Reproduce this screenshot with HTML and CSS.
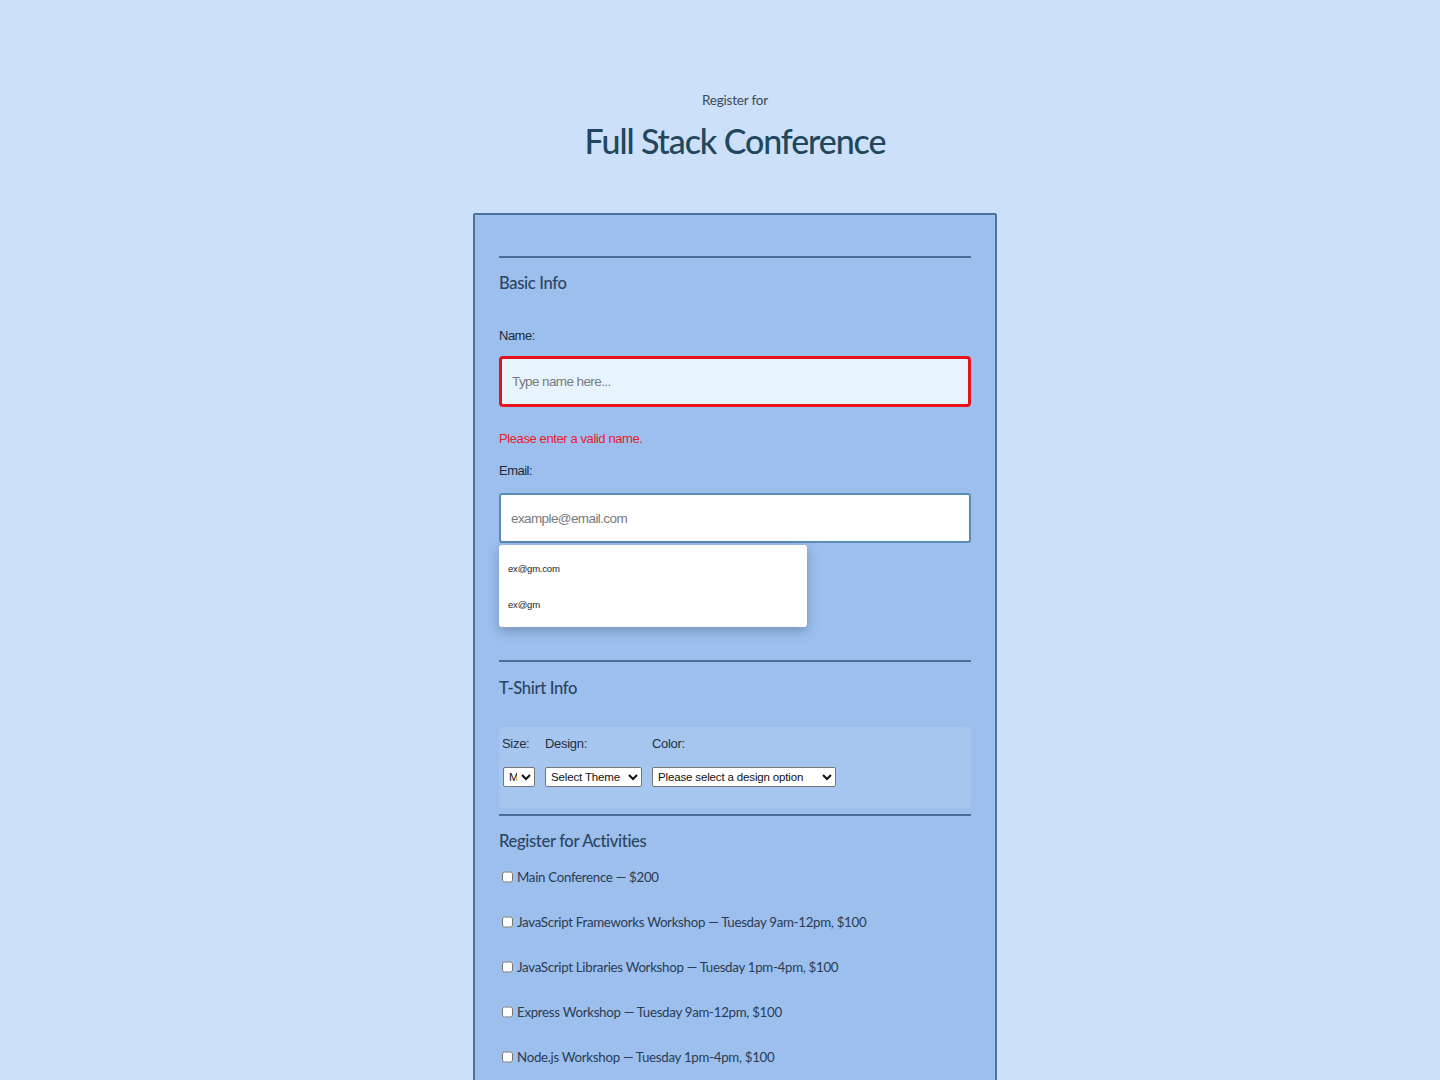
FILE: index.html
```html
<!DOCTYPE html>
<html lang="en">
<head>
<meta charset="utf-8">
<title>Full Stack Conference</title>
<link rel="stylesheet" href="styles.css">
</head>
<body>
<header class="page-header">
  <p class="pre-title">Register for</p>
  <h1 class="title">Full Stack Conference</h1>
</header>
<form class="reg-form">
  <section class="section basic">
    <h2 class="section-title">Basic Info</h2>
    <label class="field-label label-name" for="name">Name:</label>
    <input class="text-input name-input" id="name" type="text" placeholder="Type name here...">
    <p class="error">Please enter a valid name.</p>
    <label class="field-label label-email" for="email">Email:</label>
    <div class="email-wrap">
      <input class="text-input email-input" id="email" type="text" placeholder="example@email.com">
      <ul class="suggest">
        <li class="suggest-item">ex@gm.com</li>
        <li class="suggest-item">ex@gm</li>
      </ul>
    </div>
  </section>
  <section class="section shirt">
    <h2 class="section-title">T-Shirt Info</h2>
    <div class="shirt-box">
      <div class="shirt-col">
        <span class="small-label">Size:</span>
        <select class="sel sel-size"><option>M</option></select>
      </div>
      <div class="shirt-col">
        <span class="small-label">Design:</span>
        <select class="sel sel-design"><option>Select Theme</option></select>
      </div>
      <div class="shirt-col">
        <span class="small-label">Color:</span>
        <select class="sel sel-color"><option>Please select a design option</option></select>
      </div>
    </div>
  </section>
  <section class="section activities">
    <h2 class="section-title">Register for Activities</h2>
    <label class="activity"><input class="check" type="checkbox"><span>Main Conference — $200</span></label>
    <label class="activity"><input class="check" type="checkbox"><span>JavaScript Frameworks Workshop — Tuesday 9am-12pm, $100</span></label>
    <label class="activity"><input class="check" type="checkbox"><span>JavaScript Libraries Workshop — Tuesday 1pm-4pm, $100</span></label>
    <label class="activity"><input class="check" type="checkbox"><span>Express Workshop — Tuesday 9am-12pm, $100</span></label>
    <label class="activity"><input class="check" type="checkbox"><span>Node.js Workshop — Tuesday 1pm-4pm, $100</span></label>
  </section>
</form>
</body>
</html>
```
FILE: styles.css
```css
* { box-sizing: border-box; }

body {
  margin: 0;
  padding-left: 30px;
  background: #cce0f9;
  font-family: "Liberation Sans", Arial, sans-serif;
  color: #24394d;
}

.page-header {
  text-align: center;
  padding-top: 90px;
}

.pre-title {
  margin: 0;
  font-family: Lato, "Liberation Sans", sans-serif;
  font-size: 13.5px;
  line-height: 20px;
  letter-spacing: -0.2px;
  color: #3a4a58;
}

.title {
  margin: 9px 0 0;
  font-family: Lato, "Liberation Sans", sans-serif;
  font-size: 34px;
  line-height: 44px;
  font-weight: 500;
  letter-spacing: -1.1px;
  color: #22475c;
}

.reg-form {
  width: 524px;
  margin: 50px auto 0;
  background: #9dbfee;
  border: 2px solid #4d739c;
  border-radius: 2px;
  padding: 41px 24px 60px;
}

.section {
  border-top: 2px solid #4a7099;
}

.section-title {
  margin: 11px 0 0;
  font-family: Lato, "Liberation Sans", sans-serif;
  font-size: 16.6px;
  line-height: 28px;
  font-weight: 500;
  letter-spacing: -0.35px;
  color: #2a4560;
}

.field-label {
  display: block;
  font-size: 13px;
  line-height: 20px;
  letter-spacing: -0.5px;
  color: #1d2a36;
}

.label-name { margin-top: 29px; }
.label-email { margin-top: 12px; }

.text-input {
  display: block;
  width: 100%;
  font-family: inherit;
  font-size: 13.5px;
  letter-spacing: -0.6px;
  padding: 0 10px;
  outline: none;
}

.text-input::placeholder { color: #777b80; }

.name-input {
  margin-top: 10px;
  height: 51px;
  background: #e8f4fd;
  border: 3px solid #e5121c;
  border-radius: 4px;
}

.error {
  margin: 22px 0 0;
  font-size: 13px;
  line-height: 20px;
  letter-spacing: -0.4px;
  color: #e8202c;
}

.email-wrap {
  position: relative;
  margin-top: 12px;
  margin-bottom: 117px;
}

.email-input {
  height: 50px;
  background: #ffffff;
  border: 2px solid #5a8cb4;
  border-radius: 3px;
}

.suggest {
  position: absolute;
  top: 52px;
  left: 0;
  width: 308px;
  height: 82px;
  margin: 0;
  padding: 14px 0 0;
  list-style: none;
  background: #ffffff;
  border-radius: 3px;
  box-shadow: 0 4px 12px rgba(40, 60, 90, 0.35);
}

.suggest-item {
  height: 36px;
  line-height: 20px;
  padding-left: 9px;
  font-size: 9.5px;
  letter-spacing: -0.2px;
  color: #222;
}

.shirt .section-title { margin-top: 12px; }

.shirt-box {
  display: flex;
  gap: 10px;
  margin-top: 25px;
  margin-bottom: 6px;
  height: 81px;
  padding: 7px 3px 0;
  background: #a6c6f0;
  border-radius: 4px;
}

.shirt-col {
  display: flex;
  flex-direction: column;
  align-items: flex-start;
}

.small-label {
  font-size: 13px;
  line-height: 20px;
  letter-spacing: -0.3px;
  color: #24303c;
}

.sel {
  margin-top: 13px;
  height: 20px;
  font-family: inherit;
  font-size: 11.5px;
  letter-spacing: -0.15px;
  background: #fff;
  border: 1px solid #767676;
  border-radius: 2px;
  padding: 0 1px;
  color: #111;
}

.sel-size { width: 32px; margin-left: 1px; }
.sel-design { width: 97px; }
.sel-color { width: 184px; }

.activities .section-title { margin-top: 11px; }

.activity {
  display: flex;
  align-items: center;
  height: 24px;
  margin-top: 21px;
  font-family: Lato, "Liberation Sans", sans-serif;
  font-size: 13.3px;
  letter-spacing: -0.3px;
  white-space: nowrap;
  color: #2a3c50;
}

.activities .section-title + .activity { margin-top: 10px; }

.check {
  width: 11px;
  height: 12px;
  margin: 0 4px 0 3px;
}
```
